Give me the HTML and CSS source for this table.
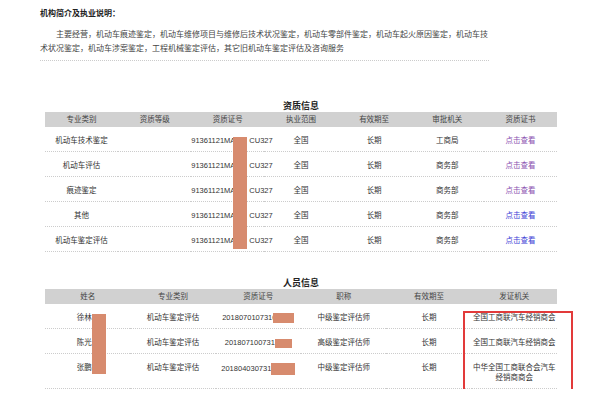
FILE: index.html
```html
<!DOCTYPE html>
<html lang="zh-CN">
<head>
  <meta charset="utf-8">
  <title>机构信息</title>
  <link rel="stylesheet" href="styles.css">
</head>
<body>
  <section class="intro">
    <h2 class="intro__title">机构简介及执业说明：</h2>
    <p class="intro__text">主要经营，机动车痕迹鉴定，机动车维修项目与维修后技术状况鉴定，机动车零部件鉴定，机动车起火原因鉴定，机动车技术状况鉴定，机动车涉案鉴定，工程机械鉴定评估，其它旧机动车鉴定评估及咨询服务</p>
  </section>

  <section class="block block--license">
    <h3 class="block__title">资质信息</h3>
    <div class="block__wrap">
      <table class="grid grid--seven">
        <thead>
          <tr>
            <th>专业类别</th><th>资质等级</th><th>资质证号</th><th>执业范围</th><th>有效期至</th><th>审批机关</th><th>资质证书</th>
          </tr>
        </thead>
        <tbody>
          <tr>
            <td>机动车技术鉴定</td><td></td><td>91361121MA<span class="gap"></span>CU327</td><td>全国</td><td>长期</td><td>工商局</td><td><a class="link link--visited" href="#">点击查看</a></td>
          </tr>
          <tr>
            <td>机动车评估</td><td></td><td>91361121MA<span class="gap"></span>CU327</td><td>全国</td><td>长期</td><td>商务部</td><td><a class="link link--visited" href="#">点击查看</a></td>
          </tr>
          <tr>
            <td>痕迹鉴定</td><td></td><td>91361121MA<span class="gap"></span>CU327</td><td>全国</td><td>长期</td><td>商务部</td><td><a class="link link--visited" href="#">点击查看</a></td>
          </tr>
          <tr>
            <td>其他</td><td></td><td>91361121MA<span class="gap"></span>CU327</td><td>全国</td><td>长期</td><td>商务部</td><td><a class="link" href="#">点击查看</a></td>
          </tr>
          <tr>
            <td>机动车鉴定评估</td><td></td><td>91361121MA<span class="gap"></span>CU327</td><td>全国</td><td>长期</td><td>商务部</td><td><a class="link" href="#">点击查看</a></td>
          </tr>
        </tbody>
      </table>
      <span class="mask mask--license"></span>
    </div>
  </section>

  <section class="block block--people">
    <h3 class="block__title">人员信息</h3>
    <div class="block__wrap">
      <table class="grid grid--six">
        <thead>
          <tr>
            <th>姓名</th><th>专业类别</th><th>资质证号</th><th>职称</th><th>有效期至</th><th>发证机关</th>
          </tr>
        </thead>
        <tbody>
          <tr>
            <td>徐林<span class="gap gap--name"></span></td><td>机动车鉴定评估</td><td>2018070107310<span class="mask mask--inline mask--a"></span></td><td>中级鉴定评估师</td><td>长期</td><td class="grid__wrap">全国工商联汽车经销商会</td>
          </tr>
          <tr>
            <td>陈光<span class="gap gap--name"></span></td><td>机动车鉴定评估</td><td>201807100731<span class="mask mask--inline mask--b"></span></td><td>高级鉴定评估师</td><td>长期</td><td class="grid__wrap">全国工商联汽车经销商会</td>
          </tr>
          <tr>
            <td>张鹏<span class="gap gap--name"></span></td><td>机动车鉴定评估</td><td>201804030731<span class="mask mask--inline mask--c"></span></td><td>中级鉴定评估师</td><td>长期</td><td class="grid__wrap">中华全国工商联合会汽车经销商商会</td>
          </tr>
        </tbody>
      </table>
      <span class="mask mask--name"></span>
      <span class="highlight"></span>
    </div>
  </section>
</body>
</html>
```

FILE: styles.css
```css
*, *::before, *::after {
  margin: 0;
  padding: 0;
  box-sizing: border-box;
}

body {
  width: 600px;
  font-family: "Liberation Sans", "Noto Sans CJK SC", sans-serif;
  color: #333333;
  background-color: #ffffff;
}

.intro {
  width: 449px;
  margin-left: 40px;
  padding-top: 7px;
  padding-bottom: 4px;
  border-bottom: 1px dotted #cccccc;
}

.intro__title {
  font-size: 8px;
  font-weight: 700;
  line-height: 14px;
  color: #222222;
}

.intro__text {
  margin-top: 7px;
  font-size: 8px;
  line-height: 14px;
  text-indent: 2em;
  color: #444444;
}

.block {
  width: 512px;
  margin-left: 45px;
}

.block--license {
  margin-top: 39px;
}

.block--people {
  margin-top: 25px;
}

.block__title {
  font-size: 9px;
  font-weight: 700;
  line-height: 12px;
  text-align: center;
  color: #222222;
}

.block__wrap {
  position: relative;
}

.grid {
  width: 512px;
  table-layout: fixed;
  border-collapse: collapse;
  font-size: 7.5px;
}

.grid th {
  height: 15px;
  font-weight: 400;
  line-height: 15px;
  color: #444444;
  background-color: #d1d1d1;
}

.grid td {
  padding: 9px 0 5px;
  line-height: 10px;
  text-align: center;
  vertical-align: top;
  white-space: nowrap;
  border-bottom: 1px dotted #cccccc;
}

.grid td.grid__wrap {
  white-space: normal;
}

.gap {
  display: inline-block;
  width: 14px;
}

.gap--name {
  width: 7px;
}

.link {
  color: #3d3dd6;
  text-decoration: none;
}

.link--visited {
  color: #8a4fb0;
}

.mask {
  position: absolute;
  background-color: #d78b6e;
}

.mask--license {
  left: 188px;
  top: 25px;
  width: 14px;
  height: 112px;
}

.mask--name {
  left: 47px;
  top: 25px;
  width: 14px;
  height: 60px;
}

.mask--inline {
  position: static;
  display: inline-block;
  vertical-align: middle;
}

.mask--a {
  width: 21px;
  height: 10px;
  margin-left: -3px;
}

.mask--b {
  width: 17px;
  height: 9px;
}

.mask--c {
  width: 24px;
  height: 12px;
}

.highlight {
  position: absolute;
  left: 418px;
  top: 22px;
  width: 110px;
  height: 80px;
  border: 2px solid #e23a3a;
}
```
